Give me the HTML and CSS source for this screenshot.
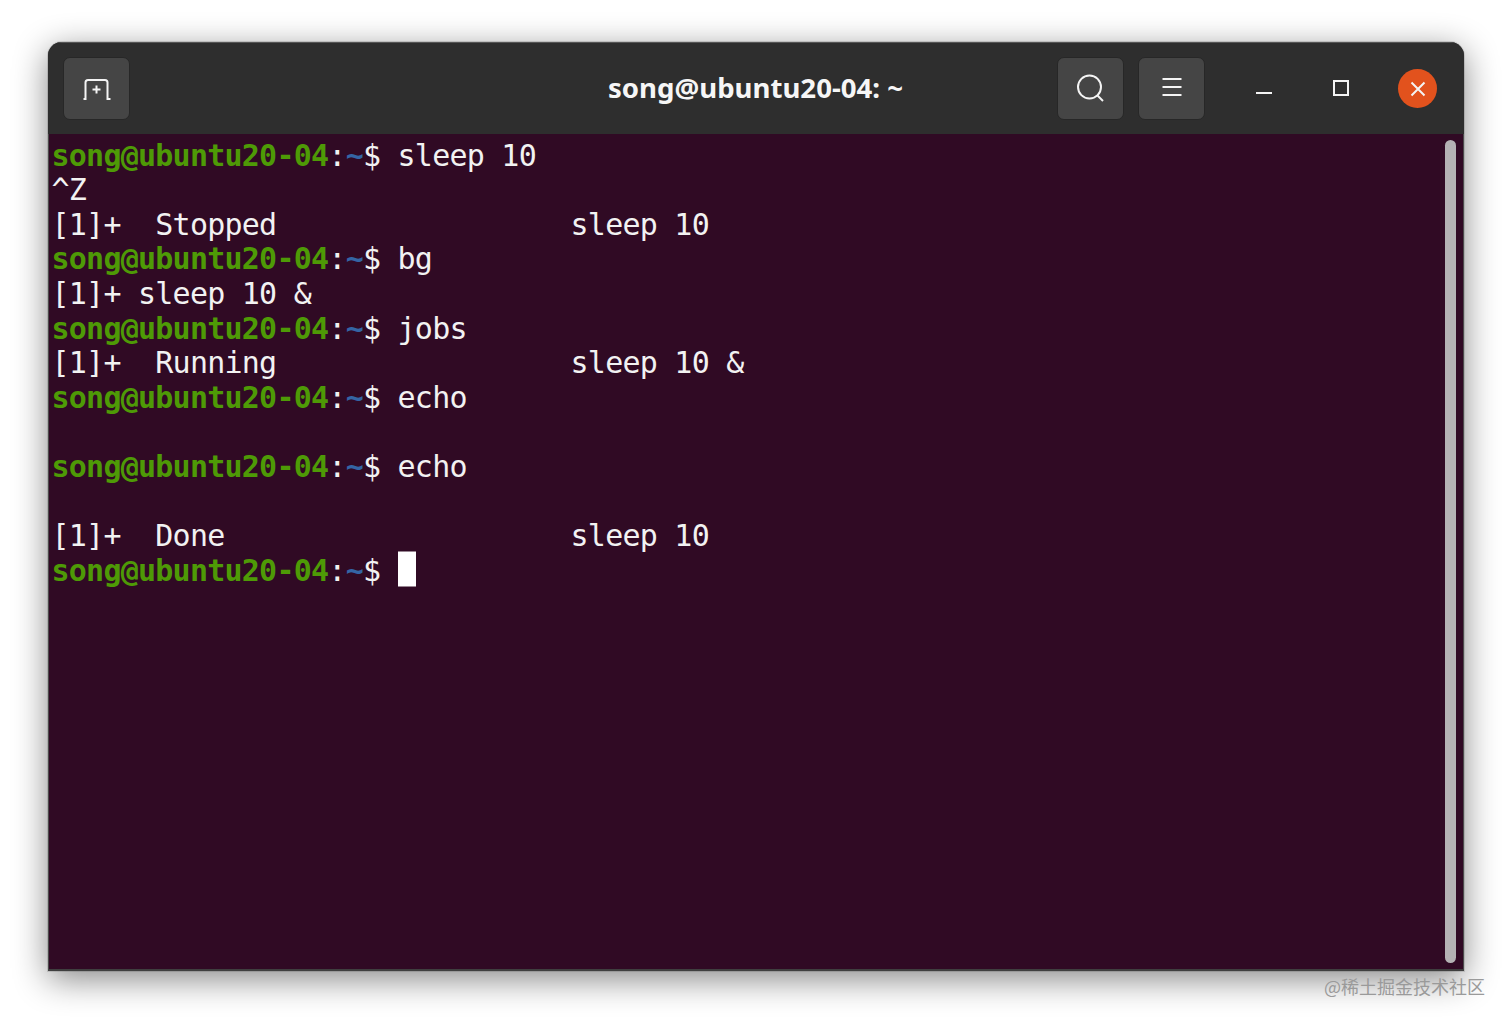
FILE: index.html
```html
<!DOCTYPE html>
<html lang="en">
<head>
<meta charset="utf-8">
<title>song@ubuntu20-04: ~</title>
<link rel="stylesheet" href="styles.css">
</head>
<body>
<main class="window">
  <header class="titlebar">
    <div class="tools">
      <button class="tool"><svg width="30" height="24" viewBox="0 0 30 24" class="ico"><path d="M1.5 22H3.500V5.500Q3.500 3 6 3H23Q25.500 3 25.500 5.500V22H28.500M14.500 8.500V16.500M10.500 12.500H18.500"/></svg></button>
    </div>
    <h1 class="title">song@ubuntu20-04: ~</h1>
    <div class="tools right">
      <button class="tool"><svg width="30" height="30" viewBox="0 0 30 30" class="ico"><circle cx="13.500" cy="13" r="11.500"/><path d="M21.500 21.500L27 27"/></svg></button>
      <button class="tool"><svg width="22" height="20" viewBox="0 0 22 20" class="ico raised"><path d="M1.500 2H20.500M1.500 10H20.500M1.500 18H20.500"/></svg></button>
      <div class="controls">
        <span class="ctl"><svg width="18" height="18" viewBox="0 0 18 18" class="ico"><path d="M1 13H17"/></svg></span>
        <span class="ctl"><svg width="18" height="18" viewBox="0 0 18 18" class="ico"><rect x="2" y="1" width="14" height="14"/></svg></span>
        <span class="close"><svg width="18" height="18" viewBox="0 0 18 18" class="ico"><path d="M2.500 2.500L15.500 15.500M15.500 2.500L2.500 15.500"/></svg></span>
      </div>
    </div>
  </header>
  <section class="term">
    <div class="output">
      <div class="line"><b class="host">song@ubuntu20-04</b>:<b class="path">~</b>$ sleep 10</div>
      <div class="line">^Z</div>
      <div class="line">[1]+  Stopped                 sleep 10</div>
      <div class="line"><b class="host">song@ubuntu20-04</b>:<b class="path">~</b>$ bg</div>
      <div class="line">[1]+ sleep 10 &amp;</div>
      <div class="line"><b class="host">song@ubuntu20-04</b>:<b class="path">~</b>$ jobs</div>
      <div class="line">[1]+  Running                 sleep 10 &amp;</div>
      <div class="line"><b class="host">song@ubuntu20-04</b>:<b class="path">~</b>$ echo</div>
      <div class="line"> </div>
      <div class="line"><b class="host">song@ubuntu20-04</b>:<b class="path">~</b>$ echo</div>
      <div class="line"> </div>
      <div class="line">[1]+  Done                    sleep 10</div>
      <div class="line"><b class="host">song@ubuntu20-04</b>:<b class="path">~</b>$ <span class="cursor"></span></div>
    </div>
    <div class="scrollbar"></div>
  </section>
</main>
<div class="watermark">@稀土掘金技术社区</div>
</body>
</html>
```
FILE: styles.css
```css
* { box-sizing: border-box; }
html, body { margin: 0; height: 100%; }
body {
  background: #fff;
  padding: 42px 48px 0;
  overflow: hidden;
  font-family: "Noto Sans", sans-serif;
}
.window {
  height: 929px;
  display: flex;
  flex-direction: column;
  border-radius: 14px 14px 0 0;
  box-shadow: 0 8px 34px rgba(0, 0, 0, .48), 0 0 0 1px rgba(0, 0, 0, .12);
  overflow: hidden;
  background: #2d2d2d;
}
.titlebar {
  height: 92px;
  flex: none;
  display: grid;
  grid-template-columns: 1fr auto 1fr;
  align-items: center;
  padding: 0 27px 0 15px;
  background: #2e2e2e;
  border-top: 1px solid #565656;
}
.tools { display: flex; align-items: center; gap: 14px; }
.right { justify-content: flex-end; }
.tool {
  width: 67px;
  height: 63px;
  padding: 0;
  display: flex;
  align-items: center;
  justify-content: center;
  background: #454545;
  border: 1px solid #272727;
  border-radius: 7px;
}
.ico { fill: none; stroke: #f4f4f4; stroke-width: 2; display: block; }
.raised { margin-bottom: 3px; }
.title {
  margin: 0 0 4px 11px;
  color: #f6f6f6;
  font-size: 27.600px;
  font-weight: 700;
  white-space: pre;
}
.controls { display: flex; align-items: center; gap: 58px; margin-left: 35px; }
.ctl { width: 19px; height: 18px; display: flex; align-items: center; justify-content: center; }
.close {
  width: 39px;
  height: 39px;
  border-radius: 50%;
  background: #e2521d;
  display: flex;
  align-items: center;
  justify-content: center;
  margin-left: -10px;
}
.term {
  flex: 1;
  display: flex;
  justify-content: space-between;
  background: #300a24;
  border-left: 1px solid #4a4a4a;
  border-right: 1px solid #4a4a4a;
  border-bottom: 2px solid #3f3f3f;
  padding: 6px 7px 6px 3px;
}
.output {
  font-family: "DejaVu Sans Mono", monospace;
  font-size: 30px;
  letter-spacing: -.76px;
  color: #f2f2f2;
  margin: -1.500px 0 0 -.500px;
}
.line { height: 34.630px; line-height: 34.630px; white-space: pre; }
.host { color: #4e9a06; font-weight: 700; }
.path { color: #3465a4; font-weight: 700; }
.cursor {
  display: inline-block;
  width: 18px;
  height: 35px;
  background: #fff;
  vertical-align: top;
  transform: translateY(-2.500px);
}
.scrollbar {
  width: 11px;
  flex: none;
  background: #b4b2b4;
  border-radius: 6px;
}
.watermark {
  position: absolute;
  right: 27px;
  bottom: 27px;
  color: #9a9a9a;
  font-family: "Noto Sans CJK SC", sans-serif;
  font-size: 18px;
  line-height: 24px;
}
```
